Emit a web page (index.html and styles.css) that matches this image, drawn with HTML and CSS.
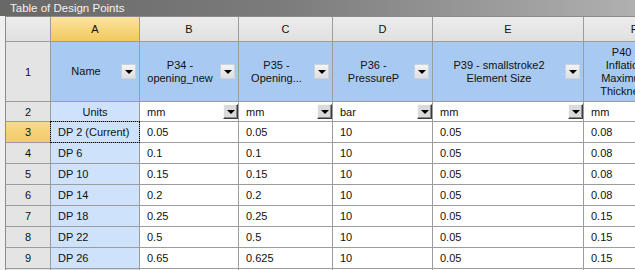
FILE: index.html
```html
<!DOCTYPE html>
<html>
<head>
<meta charset="utf-8">
<link rel="stylesheet" href="styles.css">
</head>
<body>
<div class="title">Table of Design Points</div>
<div class="wrap">
<div class="sheet">
  <div class="c ch"></div>
  <div class="c ch sel">A</div>
  <div class="c ch">B</div>
  <div class="c ch">C</div>
  <div class="c ch">D</div>
  <div class="c ch">E</div>
  <div class="c ch">F</div>

  <div class="c rh">1</div>
  <div class="c param"><span class="ptext">Name</span><span class="hbtn"></span></div>
  <div class="c param"><span class="ptext">P34 -<br>opening_new</span><span class="hbtn"></span></div>
  <div class="c param"><span class="ptext">P35 -<br>Opening...</span><span class="hbtn"></span></div>
  <div class="c param"><span class="ptext">P36 -<br>PressureP</span><span class="hbtn"></span></div>
  <div class="c param"><span class="ptext">P39 - smallstroke2<br>Element Size</span><span class="hbtn"></span></div>
  <div class="c param"><span class="ptext">P40 -<br>Inflation<br>Maximum<br>Thickness</span><span class="hbtn"></span></div>

  <div class="c rh">2</div>
  <div class="c name center">Units</div>
  <div class="c unit"><span class="utext">mm</span><span class="ubtn"></span></div>
  <div class="c unit"><span class="utext">mm</span><span class="ubtn"></span></div>
  <div class="c unit"><span class="utext">bar</span><span class="ubtn"></span></div>
  <div class="c unit"><span class="utext">mm</span><span class="ubtn"></span></div>
  <div class="c unit"><span class="utext">mm</span><span class="ubtn"></span></div>

  <div class="c rh sel">3</div>
  <div class="c name focus">DP 2 (Current)</div>
  <div class="c">0.05</div><div class="c">0.05</div><div class="c">10</div><div class="c">0.05</div><div class="c">0.08</div>

  <div class="c rh">4</div>
  <div class="c name">DP 6</div>
  <div class="c">0.1</div><div class="c">0.1</div><div class="c">10</div><div class="c">0.05</div><div class="c">0.08</div>

  <div class="c rh">5</div>
  <div class="c name">DP 10</div>
  <div class="c">0.15</div><div class="c">0.15</div><div class="c">10</div><div class="c">0.05</div><div class="c">0.08</div>

  <div class="c rh">6</div>
  <div class="c name">DP 14</div>
  <div class="c">0.2</div><div class="c">0.2</div><div class="c">10</div><div class="c">0.05</div><div class="c">0.08</div>

  <div class="c rh">7</div>
  <div class="c name">DP 18</div>
  <div class="c">0.25</div><div class="c">0.25</div><div class="c">10</div><div class="c">0.05</div><div class="c">0.15</div>

  <div class="c rh">8</div>
  <div class="c name">DP 22</div>
  <div class="c">0.5</div><div class="c">0.5</div><div class="c">10</div><div class="c">0.05</div><div class="c">0.15</div>

  <div class="c rh">9</div>
  <div class="c name">DP 26</div>
  <div class="c">0.65</div><div class="c">0.625</div><div class="c">10</div><div class="c">0.05</div><div class="c">0.15</div>

  <div class="c rh">10</div>
  <div class="c name">DP 30</div>
  <div class="c"></div><div class="c"></div><div class="c"></div><div class="c"></div><div class="c"></div>
</div>
</div>
</body>
</html>
```
FILE: styles.css
```css
html, body {
  margin: 0;
  padding: 0;
  width: 635px;
  height: 270px;
  overflow: hidden;
  background: #f0f0f0;
  font-family: "Liberation Sans", Arial, sans-serif;
  font-size: 11px;
  color: #111;
}

.title {
  height: 16px;
  line-height: 16px;
  padding-left: 10px;
  font-size: 11.5px;
  color: #f2f2f2;
  background: linear-gradient(to right, #686868 0%, #7c7c7c 45%, #b0b0b0 100%);
}

.wrap {
  padding-left: 5px;
}

.sheet {
  display: grid;
  width: max-content;
  grid-template-columns: 44px 88px 98px 93px 99px 150px 100px;
  grid-template-rows: 24px 59px 19px repeat(8, 20px);
  gap: 1px;
  background: #9c9c9c;
  border-top: 1px solid #8c8c8c;
  border-left: 1px solid #8c8c8c;
}

.c {
  background: #fff;
  padding-left: 7px;
  display: flex;
  align-items: center;
  white-space: nowrap;
  overflow: hidden;
}

.ch {
  background: linear-gradient(#ececec, #e0e0e0);
  justify-content: center;
  padding-left: 0;
}

.rh {
  background: #e4e4e4;
  justify-content: center;
  padding-left: 0;
}

.sel {
  background: linear-gradient(#fbe4a0, #f3c85e);
}

.rh.sel {
  background: linear-gradient(#f8da8c, #f3ca66);
}

.param {
  background: #a8c9f1;
  padding-left: 0;
  padding-right: 3px;
}

.ptext {
  flex: 1;
  text-align: center;
  line-height: 13px;
}

.hbtn {
  flex: none;
  width: 15px;
  height: 15px;
  box-sizing: border-box;
  background: linear-gradient(#f4f4f4, #dedede);
  border: 1px solid #c9d3df;
  display: flex;
  align-items: center;
  justify-content: center;
}

.hbtn::after,
.ubtn::after {
  content: "";
  border-left: 4px solid transparent;
  border-right: 4px solid transparent;
  border-top: 4px solid #000;
}

.unit {
  padding-right: 0;
}

.utext {
  flex: 1;
}

.ubtn {
  flex: none;
  width: 15px;
  height: 15px;
  box-sizing: border-box;
  background: #dadada;
  border-top: 1px solid #fafafa;
  border-left: 1px solid #fafafa;
  border-right: 1px solid #3c3c3c;
  border-bottom: 1px solid #3c3c3c;
  box-shadow: inset -1px -1px 0 #8a8a8a;
  display: flex;
  align-items: center;
  justify-content: center;
}

.name {
  background: #cfe2fb;
}

.center {
  justify-content: center;
  padding-left: 0;
}

.focus {
  outline: 1px dotted #000;
}
```
